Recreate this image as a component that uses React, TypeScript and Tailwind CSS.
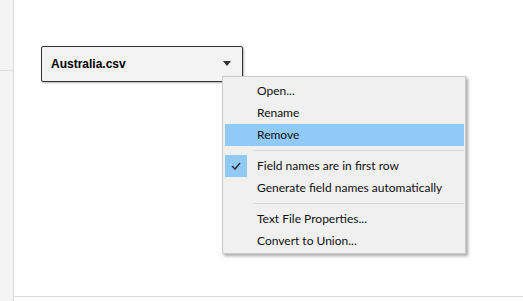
export default function App() {
  const menuFont = { fontFamily: 'Lato, "Noto Sans", sans-serif' };
  return (
    <div className="relative flex w-[523px] h-[301px] bg-white overflow-hidden">
      <div className="w-[14px] h-full bg-[#f3f3f3] border-r border-[#dcdcdc] flex flex-col">
        <div className="h-[71px] border-b border-[#dcdcdc]"></div>
      </div>
      <div className="flex-1 flex flex-col">
        <div className="h-[296px] pl-[27px] pt-[46px]">
          <div className="w-[202px] h-[36px] flex items-center justify-between pl-[9px] pr-[11px] bg-[#f3f3f3] border border-[#333] rounded-[2px] shadow-[1px_1px_2px_rgba(0,0,0,0.3)]">
            <span className="text-[12px] font-bold text-black" style={{ fontFamily: '"Liberation Sans", Arial, sans-serif' }}>
              Australia.csv
            </span>
            <svg width="8" height="5" viewBox="0 0 8 5" className="mt-[-2px]">
              <path d="M0 0 H8 L4 5 Z" fill="#333" />
            </svg>
          </div>
        </div>
        <div className="flex-1 border-t border-[#dcdcdc]"></div>
      </div>

      <div
        className="absolute left-[222px] top-[76px] w-[244px] bg-[#f0f0f0] border border-[#cccccc] shadow-[2px_2px_3px_rgba(0,0,0,0.35)] pt-[3px] pb-[1px] pl-[2px] pr-px text-[12px] text-[#111]"
        style={menuFont}
      >
        <MenuItem label="Open..." />
        <MenuItem label="Rename" />
        <MenuItem label="Remove" active />
        <div className="h-[9px] flex items-center pl-[29px]">
          <div className="w-full h-px bg-[#d7d7d7]"></div>
        </div>
        <MenuItem label="Field names are in first row" checked />
        <MenuItem label="Generate field names automatically" />
        <div className="h-[9px] flex items-center pl-[29px]">
          <div className="w-full h-px bg-[#d7d7d7]"></div>
        </div>
        <MenuItem label="Text File Properties..." />
        <MenuItem label="Convert to Union..." />
      </div>
    </div>
  );
}

function MenuItem({ label, active, checked }: { label: string; active?: boolean; checked?: boolean }) {
  return (
    <div className={`h-[22px] flex items-center ${active ? "bg-[#91c9f7]" : ""}`}>
      <div className={`w-[22px] h-[22px] flex items-center justify-center ${checked ? "bg-[#91c9f7]" : ""}`}>
        {checked && (
          <svg width="10" height="8" viewBox="0 0 10 8">
            <path d="M1 4 L4 7 L9 1" stroke="#333" strokeWidth="1.6" fill="none" />
          </svg>
        )}
      </div>
      <span className="pl-[10px] leading-none">{label}</span>
    </div>
  );
}
